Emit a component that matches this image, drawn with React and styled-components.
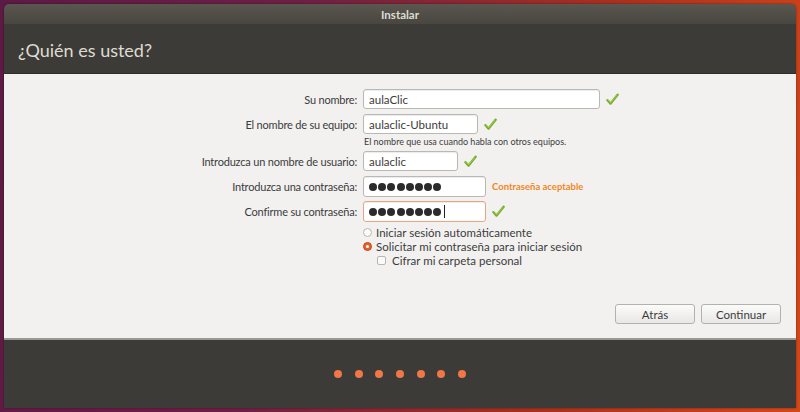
import React from "react";
import styled, { createGlobalStyle } from "styled-components";

const Global = createGlobalStyle`
  html, body { margin: 0; padding: 0; }
  body {
    width: 800px;
    height: 412px;
    overflow: hidden;
    font-family: Lato, "Noto Sans", sans-serif;
    background: linear-gradient(100deg, #5c1a44 0%, #6e1f45 35%, #a8301f 70%, #d4471a 100%);
  }
`;

const Page = styled.div`
  width: 800px;
  height: 412px;
  padding: 4px;
  box-sizing: border-box;
`;

const Window = styled.div`
  height: 404px;
  display: flex;
  flex-direction: column;
  border-radius: 5px 5px 0 0;
  overflow: hidden;
  box-shadow: 0 0 2px rgba(0, 0, 0, 0.5);
`;

const TitleBar = styled.div`
  height: 20px;
  flex: none;
  display: flex;
  align-items: center;
  justify-content: center;
  background: linear-gradient(#5a5750, #48463f);
  color: #dfdbd2;
  font-size: 11.5px;
  font-weight: bold;
`;

const Header = styled.div`
  height: 50px;
  flex: none;
  display: flex;
  align-items: center;
  padding: 3px 0 0 14px;
  background: #3c3b37;
  color: #dfdbd2;
  font-size: 18px;
  border-bottom: 1px solid #2e2d29;
  box-sizing: border-box;
`;

const Content = styled.div`
  flex: 1;
  background: #f2f1f0;
  display: flex;
  flex-direction: column;
  padding-top: 15px;
  color: #3c3c3c;
  font-size: 11px;
  border-bottom: 2px solid #9a9894;
`;

const Row = styled.div`
  display: grid;
  grid-template-columns: 353px 1fr;
  column-gap: 6px;
  align-items: center;
  margin-top: ${(p) => p.$top || 0}px;
`;

const Label = styled.div`
  text-align: right;
  white-space: nowrap;
  letter-spacing: -0.2px;
`;

const Field = styled.div`
  display: flex;
  align-items: center;
  gap: 6px;
`;

const Input = styled.div`
  width: ${(p) => p.$w}px;
  height: ${(p) => p.$h || 20}px;
  box-sizing: border-box;
  border: 1px solid ${(p) => (p.$focus ? "#e9a57f" : "#bab8b3")};
  border-radius: 3px;
  background: #fff;
  box-shadow: inset 0 1px 1px rgba(0, 0, 0, 0.08);
  display: flex;
  align-items: center;
  padding-left: 5px;
  color: #3c3c3c;
  font-size: 11.5px;
`;

const Dot = styled.span`
  display: inline-block;
  width: 8px;
  height: 8px;
  border-radius: 50%;
  background: #2b2b2b;
  margin-right: 1.2px;
`;

const Caret = styled.span`
  display: inline-block;
  width: 1px;
  height: 13px;
  background: #222;
  margin-left: 1px;
`;

const Hint = styled.div`
  font-size: 9px;
  color: #3c3c3c;
  padding-left: 1px;
`;

const Strength = styled.span`
  color: #f1871f;
  font-size: 9.5px;
  font-weight: bold;
`;

const Option = styled.label`
  display: flex;
  align-items: center;
  gap: 4px;
  height: 14px;
  padding-left: ${(p) => p.$indent || 0}px;
  color: #3c3c3c;
  font-size: 11.5px;
`;

const Radio = styled.span`
  width: 9px;
  height: 9px;
  border-radius: 50%;
  box-sizing: border-box;
  border: 1px solid ${(p) => (p.$on ? "#c8491d" : "#b8b6b1")};
  background: ${(p) => (p.$on ? "#e3602a" : "#fafafa")};
  display: flex;
  align-items: center;
  justify-content: center;
  &::after {
    content: "";
    width: 3px;
    height: 3px;
    border-radius: 50%;
    background: ${(p) => (p.$on ? "#fff" : "transparent")};
  }
`;

const Box = styled.span`
  width: 9px;
  height: 9px;
  border-radius: 2px;
  box-sizing: border-box;
  border: 1px solid #b8b6b1;
  background: #fafafa;
  margin-right: 2px;
`;

const Spacer = styled.div`
  flex: 1;
`;

const Buttons = styled.div`
  display: flex;
  justify-content: flex-end;
  gap: 6px;
  padding: 0 15px 14px 0;
`;

const Button = styled.div`
  width: 80px;
  height: 20px;
  box-sizing: border-box;
  border: 1px solid #b3b1ac;
  border-radius: 3px;
  background: linear-gradient(#fbfbfa, #e8e7e5);
  display: flex;
  align-items: center;
  justify-content: center;
  color: #3c3c3c;
  font-size: 11.5px;
`;

const Footer = styled.div`
  height: 68px;
  flex: none;
  background: #3c3b37;
  display: flex;
  align-items: center;
  justify-content: center;
  gap: 12.6px;
`;

const Step = styled.span`
  width: 8px;
  height: 8px;
  border-radius: 50%;
  background: #f07746;
`;

const Check = () => (
  <svg width="13" height="13" viewBox="0 0 13 13">
    <path
      d="M1.5 7.2 L4.6 10.6 L11.6 1.8"
      fill="none"
      stroke="#78ad2c"
      strokeWidth="2.4"
      strokeLinecap="round"
      strokeLinejoin="round"
    />
    <path
      d="M2.2 7.4 L4.6 9.8 L10.8 2.4"
      fill="none"
      stroke="#a6d45a"
      strokeWidth="0.8"
      strokeLinecap="round"
    />
  </svg>
);

const Dots = ({ n, caret }) => (
  <>
    {Array.from({ length: n }).map((_, i) => (
      <Dot key={i} />
    ))}
    {caret && <Caret />}
  </>
);

export default function App() {
  return (
    <Page>
      <Global />
      <Window>
        <TitleBar>Instalar</TitleBar>
        <Header>¿Quién es usted?</Header>
        <Content>
          <Row>
            <Label>Su nombre:</Label>
            <Field>
              <Input $w={237}>aulaClic</Input>
              <Check />
            </Field>
          </Row>
          <Row $top={5}>
            <Label>El nombre de su equipo:</Label>
            <Field>
              <Input $w={115}>aulaclic-Ubuntu</Input>
              <Check />
            </Field>
          </Row>
          <Row $top={2}>
            <span />
            <Hint>El nombre que usa cuando habla con otros equipos.</Hint>
          </Row>
          <Row $top={4}>
            <Label>Introduzca un nombre de usuario:</Label>
            <Field>
              <Input $w={95}>aulaclic</Input>
              <Check />
            </Field>
          </Row>
          <Row $top={5}>
            <Label>Introduzca una contraseña:</Label>
            <Field>
              <Input $w={123} $h={21}>
                <Dots n={8} />
              </Input>
              <Strength>Contraseña aceptable</Strength>
            </Field>
          </Row>
          <Row $top={4}>
            <Label>Confirme su contraseña:</Label>
            <Field>
              <Input $w={123} $h={21} $focus>
                <Dots n={8} caret />
              </Input>
              <Check />
            </Field>
          </Row>
          <Row $top={3}>
            <span />
            <div>
              <Option>
                <Radio />
                Iniciar sesión automáticamente
              </Option>
              <Option>
                <Radio $on />
                Solicitar mi contraseña para iniciar sesión
              </Option>
              <Option $indent={14}>
                <Box />
                Cifrar mi carpeta personal
              </Option>
            </div>
          </Row>
          <Spacer />
          <Buttons>
            <Button>Atrás</Button>
            <Button>Continuar</Button>
          </Buttons>
        </Content>
        <Footer>
          {Array.from({ length: 7 }).map((_, i) => (
            <Step key={i} />
          ))}
        </Footer>
      </Window>
    </Page>
  );
}
